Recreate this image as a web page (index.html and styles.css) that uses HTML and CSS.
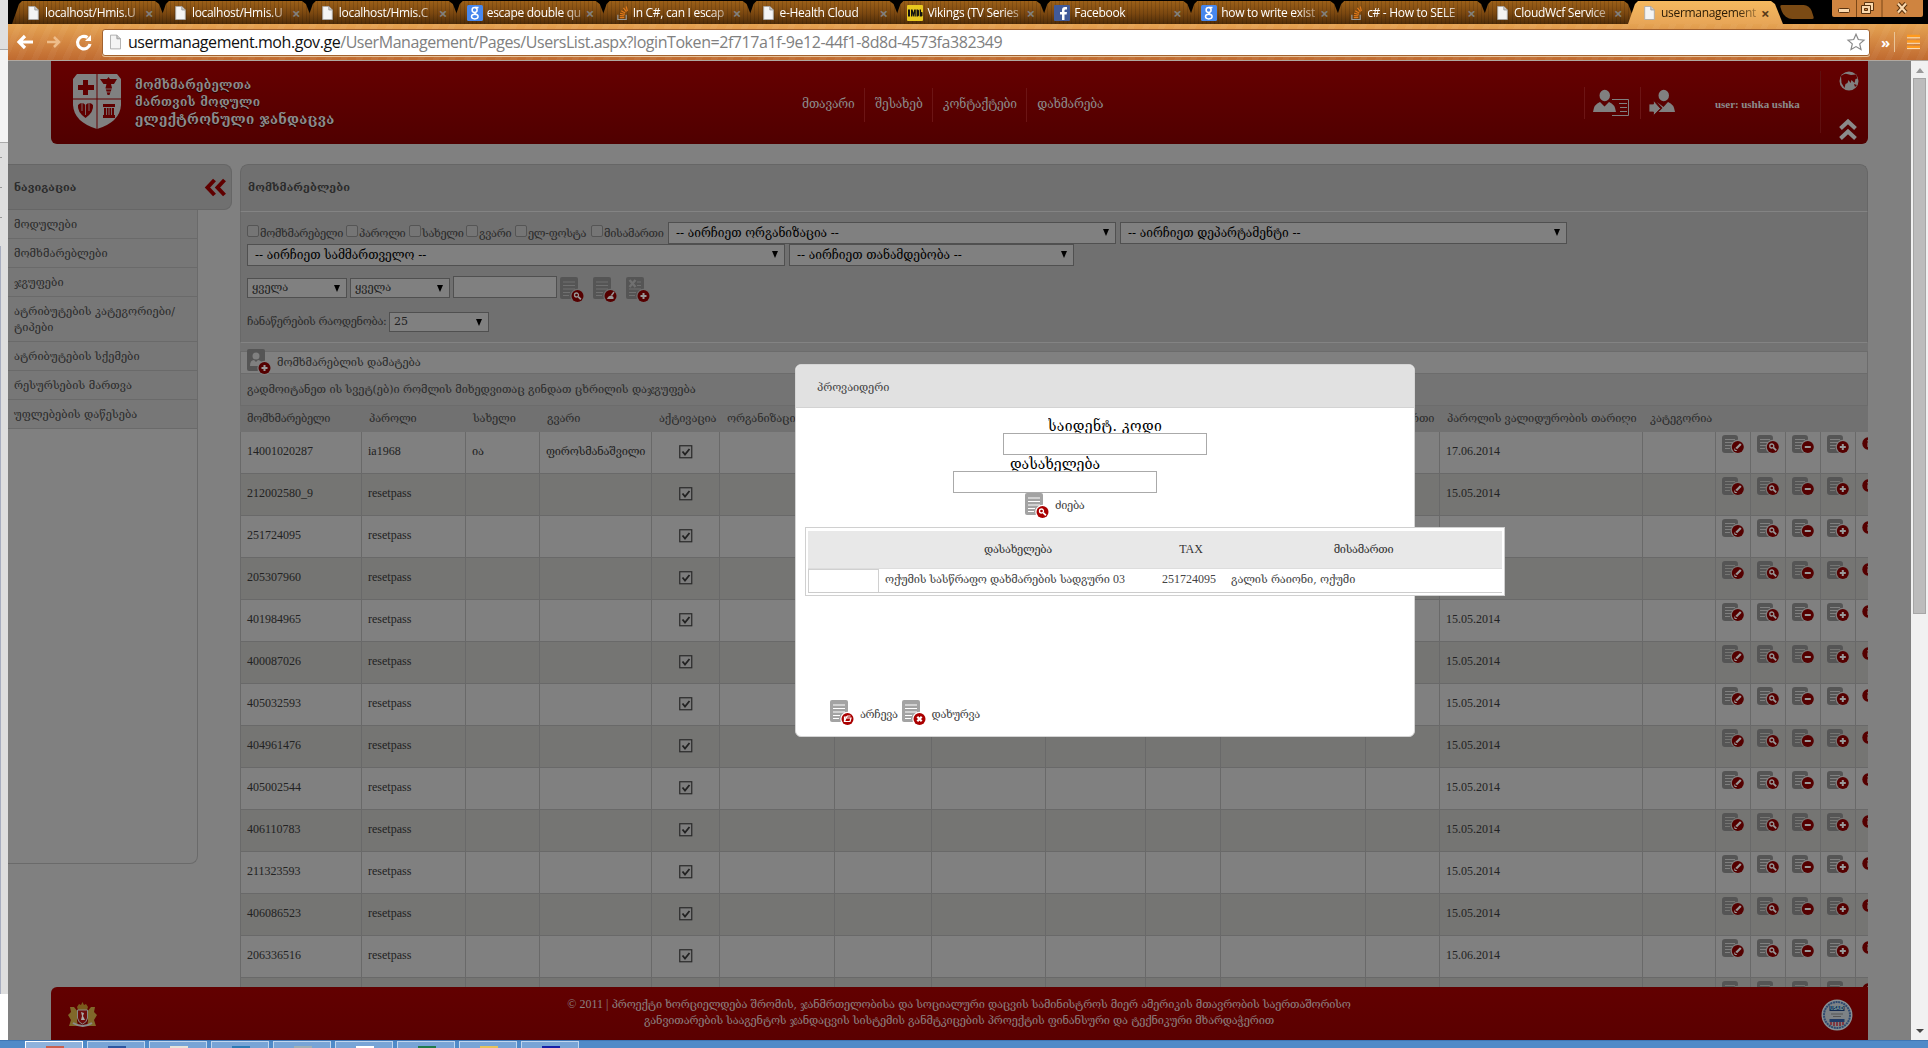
FILE: index.html
```html
<!DOCTYPE html>
<html lang="ka">
<head>
<meta charset="utf-8">
<title>usermanagement</title>
<link rel="stylesheet" href="styles.css">
</head>
<body>
<svg class="defs" aria-hidden="true">
  <symbol id="page" viewBox="0 0 12 16"><path d="M.5.5h7l4 4v11h-11z" fill="#f4f4f4" stroke="#aaa"/><path d="M7.5.5v4h4" fill="#ccc" stroke="#999"/></symbol>
  <symbol id="goog" viewBox="0 0 16 16"><rect width="16" height="16" rx="1.5" fill="#4787ed"/><g fill="none" stroke="#fff" stroke-width="1.5"><ellipse cx="7.6" cy="5" rx="2.5" ry="2.4"/><ellipse cx="7.8" cy="11.6" rx="3.3" ry="2.3"/><path d="M11.5 2.4H8M7 7.5l2 1.7"/></g></symbol>
  <symbol id="so" viewBox="0 0 14 16"><path d="M2 10v5h9v-5" fill="none" stroke="#999" stroke-width="1.3"/><path d="M4 13h5M4 10.8l5 .4M4.4 8.3l5 1.2M5.6 5.5l4.3 2.6M8 2.5l3.2 4M11 1l1.3 5" stroke="#e27a1b" stroke-width="1.3"/></symbol>
  <symbol id="imdb" viewBox="0 0 16 16"><rect width="16" height="16" rx="1" fill="#e8c81e"/><path d="M1 4.5h2v7H1zM4 4.5h1.6l.8 3.5.8-3.5h1.6v7H7.5V8l-.8 3.5H6L5.300 8v3.500H4zM9.500 4.500H11l1 1v5l-1 1H9.500zM12.700 4.500H14V7l1.500.3v3.700l-1 .5h-1.800z" fill="#111"/></symbol>
  <symbol id="fb" viewBox="0 0 16 16"><rect width="16" height="16" rx="1" fill="#415a99"/><path d="M8 15V9.500H6V7h2V5q0-3 3-3h2v2.500h-1.500q-1 0-1 1V7H13l-.4 2.500h-2.100V15z" fill="#fff"/></symbol>
  <symbol id="doc" viewBox="0 0 24 26"><path d="M2 0h14q2 0 2 2v18q0 2-2 2H2q-2 0-2-2V2q0-2 2-2z" fill="var(--doc)"/><path d="M3 5h12M3 8.500h12M3 12h12M3 15.500h7M3 18.500h6" stroke="var(--paper)"/><circle cx="17.500" cy="19" r="7.200" fill="var(--paper)"/><circle cx="17.500" cy="19" r="6" fill="var(--badge)"/></symbol>
  <symbol id="rowdoc" viewBox="0 0 24 20"><path d="M3 0h10q3 0 3 3v15H3q-3 0-3-3V3q0-3 3-3z" fill="var(--doc)"/><path d="M3 4.500h10M3 7.500h8M3 10.500h6M3 13.500h5" stroke="var(--paper)"/><circle cx="15.800" cy="12" r="7.200" fill="var(--paper)"/><circle cx="15.800" cy="12" r="6" fill="var(--badge)"/></symbol>
  <symbol id="g-search" viewBox="-6 -6 12 12"><circle cx="-1" cy="-1" r="2" fill="none" stroke="var(--glyph)" stroke-width="1.300"/><path d="M.6.6L3.400 3.400" stroke="var(--glyph)" stroke-width="1.800"/></symbol>
  <symbol id="g-plus" viewBox="-6 -6 12 12"><path d="M-3 0h6M0-3v6" stroke="var(--glyph)" stroke-width="2"/></symbol>
  <symbol id="g-minus" viewBox="-6 -6 12 12"><path d="M-3 0h6" stroke="var(--glyph)" stroke-width="2"/></symbol>
  <symbol id="g-edit" viewBox="-6 -6 12 12"><path d="M-1.500 1.500L3-3" stroke="var(--glyph)" stroke-width="2.200"/><path d="M-3 1.500v2h2" fill="none" stroke="var(--glyph)"/></symbol>
  <symbol id="g-brush" viewBox="-6 -6 12 12"><path d="M3.500-4L1-.5" stroke="var(--glyph)" stroke-width="1.400"/><path d="M-3.500 3q1-3.500 4.500-3.500L3 1v2z" fill="var(--glyph)"/></symbol>
  <symbol id="g-open" viewBox="-6 -6 12 12"><path d="M-3 2.500v-4.500h2l1-1h3M-3 2.500l1.500-3.500h5L2.500 2.500z" fill="none" stroke="var(--glyph)" stroke-width="1.200"/></symbol>
  <symbol id="g-x" viewBox="-6 -6 12 12"><path d="M-2.200-2.200l4.400 4.400M2.200-2.200l-4.400 4.400" stroke="var(--glyph)" stroke-width="2.200"/></symbol>
</svg>

<div class="desktop">
  <div class="behind"><i class="b1"></i><i class="b2"></i><i class="b3"></i><i class="b4"></i></div>
  <div class="browser">
    <div class="tabs">
      <div class="tab"><svg class="fp"><use href="#page"/></svg><span>localhost/Hmis.U</span><b>×</b></div>
      <div class="tab"><svg class="fp"><use href="#page"/></svg><span>localhost/Hmis.U</span><b>×</b></div>
      <div class="tab"><svg class="fp"><use href="#page"/></svg><span>localhost/Hmis.C</span><b>×</b></div>
      <div class="tab"><svg class="fi"><use href="#goog"/></svg><span>escape double qu</span><b>×</b></div>
      <div class="tab"><svg class="fs"><use href="#so"/></svg><span>In C#, can I escap</span><b>×</b></div>
      <div class="tab"><svg class="fp"><use href="#page"/></svg><span>e-Health Cloud</span><b>×</b></div>
      <div class="tab"><svg class="fi"><use href="#imdb"/></svg><span>Vikings (TV Series</span><b>×</b></div>
      <div class="tab"><svg class="fi"><use href="#fb"/></svg><span>Facebook</span><b>×</b></div>
      <div class="tab"><svg class="fi"><use href="#goog"/></svg><span>how to write exist</span><b>×</b></div>
      <div class="tab"><svg class="fs"><use href="#so"/></svg><span>c# - How to SELE</span><b>×</b></div>
      <div class="tab"><svg class="fp"><use href="#page"/></svg><span>CloudWcf Service</span><b>×</b></div>
      <div class="tab on"><svg class="fp"><use href="#page"/></svg><span>usermanagement</span><b>×</b></div>
      <div class="newtab"></div>
      <div class="winbtns">
        <svg viewBox="0 0 91 17"><path d="M0 0h91v15q0 2-2 2H2q-2 0-2-2z" fill="#cf8440"/><path d="M24.500 0v17M50 0v17" stroke="#7b4717"/><g fill="#fbd9ae" stroke="#5b3410"><rect x="6.500" y="8.500" width="11" height="4" rx="1"/><path d="M32.500 2.500h9v8h-9z"/><path d="M29.500 5.500h9v8h-9z"/><path d="M32.500 8.500h3v2h-3z" fill="#cf8440"/></g><path d="M66 3.500l8 9M74 3.500l-8 9" stroke="#5b3410" stroke-width="4.200"/><path d="M66 3.500l8 9M74 3.500l-8 9" stroke="#fbd9ae" stroke-width="2.200"/></svg>
      </div>
    </div>
    <div class="toolbar">
      <svg class="navbtns" viewBox="0 0 84 24" fill="none" stroke="#fff" stroke-width="3.200"><path d="M17 6l-6 6 6 6M11 12h14"/><path d="M46 7l5 5-5 5M51 12H39" stroke="#eebd8a" stroke-width="2.500"/><path d="M79.500 7.500A6.300 6.300 0 1 0 82 14"/><path d="M83 5v6h-6z" fill="#fff" stroke="none"/></svg>
      <div class="omni">
        <svg class="pg"><use href="#page"/></svg>
        <span class="url"><em>usermanagement.moh.gov.ge</em>/UserManagement/Pages/UsersList.aspx?loginToken=2f717a1f-9e12-44f1-8d8d-4573fa382349</span>
        <svg class="star" viewBox="0 0 18 18"><path d="M9 1.200l2.300 5.300 5.700.6-4.300 3.800 1.300 5.600L9 13.600l-5 2.900 1.300-5.600L1 7.100l5.700-.6z" fill="#fff" stroke="#888" stroke-width="1.200"/></svg>
      </div>
      <span class="more">»</span>
      <svg class="burger" viewBox="0 0 13 15"><path d="M0 2h13M0 7.500h13M0 13h13" stroke="#ff9a1e" stroke-width="2.600"/><path d="M0 3.800h13M0 9.300h13M0 14.600h13" stroke="#ffe3bd"/></svg>
    </div>

    <div class="view">
      <div class="site">
        <header class="top">
          <svg class="crest" viewBox="0 0 48 56"><path d="M4 0h40l4 5v26q-1 17-24 24Q1 48 0 31V5z" fill="#808080"/><path d="M24 0v55M0 25h48" stroke="#600000"/><g fill="#600000"><path d="M10 6h5v5h6v5h-6v5h-5v-5H5v-5h5z"/><path d="M27 5h7l1.500-2L37 5h7l-3 5h-3l1 4-2.500 7h-2l-2-7 1-4h-3z"/><path d="M5 31q4-4 7.500 0 4-4 7.500 0 1 7-7.500 13Q4 38 5 31zM30 30h12v3H30zM31 34h10v7H31zM30 41h12v3H30z"/></g><path d="M9 29v8M12.500 29v12M16 29v8M33.500 33v8M36 33v8M38.500 33v8M32 15h8M33 18h7" stroke="#808080" stroke-width=".8"/></svg>
          <div class="brand"><span>მომხმარებელთა</span><span>მართვის მოდული</span><span class="big">ელექტრონული ჯანდაცვა</span></div>
          <nav class="menu"><span>მთავარი</span><span>შესახებ</span><span>კონტაქტები</span><span>დახმარება</span></nav>
          <div class="usericons">
            <svg viewBox="0 0 36 27"><path d="M17 5.500a5 5.500 0 1 1-10.500 0a5 5.500 0 1 1 10.500 0zM0 22q1-8 7-10l4.500 4.500L16 12q6 2 7 10z" fill="#808080"/><path d="M19 9.500h16.500v16H19M26 13.500h8M27 17.500h7M27 21.500h7" fill="none" stroke="#808080"/></svg>
            <svg viewBox="0 0 36 27"><path d="M20 5.500a5 5.500 0 1 1-10.500 0a5 5.500 0 1 1 10.500 0zM8 12l6.500 5L19 12q6 2 7 10H9.500l4-4z" fill="#808080"/><path d="M0 14h4.500v-3.500l7 8-7 7V22H0z" fill="#808080" stroke="#5c0000" stroke-width=".8"/></svg>
          </div>
          <span class="user">user: ushka ushka</span>
          <div class="corner">
            <svg viewBox="0 0 20 20"><circle cx="10" cy="10" r="9.500" fill="#808080"/><path d="M2 5q4-3 6-2l4 1 5-.5 1.500 4-2 .5-1 4-3-3-1 3-2-3-1 3-2 1-1 4-3-5zM15 13l3 1-2 2z" fill="#600000"/></svg>
            <svg viewBox="0 0 18 21"><path d="M1.500 9.500L9 2.500l7.500 7M1.500 19.500l7.500-7 7.500 7" fill="none" stroke="#8a8a8a" stroke-width="4"/></svg>
          </div>
        </header>

        <div class="main">
          <aside>
            <div class="navhead"><span>ნავიგაცია</span><svg viewBox="0 0 21 17"><path d="M9.500 1L2.500 8.500l7 7.500M19.500 1l-7 7.500 7 7.500" fill="none" stroke="#600000" stroke-width="4"/></svg></div>
            <ul>
              <li>მოდულები</li><li>მომხმარებლები</li><li>ჯგუფები</li><li class="two">ატრიბუტების კატეგორიები/<br>ტიპები</li><li>ატრიბუტების სქემები</li><li>რესურსების მართვა</li><li>უფლებების დაწესება</li>
            </ul>
          </aside>
          <section class="content">
            <h1>მომხმარებლები</h1>
            <div class="filters">
              <div class="frow r1">
                <label style="width:99px"><i></i>მომხმარებელი</label><label style="width:63px"><i></i>პაროლი</label><label style="width:57px"><i></i>სახელი</label><label style="width:49px"><i></i>გვარი</label><label style="width:76px"><i></i>ელ-ფოსტა</label><label style="width:77px"><i></i>მისამართი</label>
                <div class="sel" style="width:448px">-- აირჩიეთ ორგანიზაცია --</div><div class="sel" style="width:447px">-- აირჩიეთ დეპარტამენტი --</div>
              </div>
              <div class="frow r2"><div class="sel" style="width:538px">-- აირჩიეთ სამმართველო --</div><div class="sel" style="width:285px">-- აირჩიეთ თანამდებობა --</div></div>
              <div class="frow r3"><div class="sel sm">ყველა</div><div class="sel sm">ყველა</div><div class="inp"></div>
                <svg class="ic" viewBox="0 0 24 26"><use href="#doc"/><use href="#g-search" x="11.500" y="13" width="12" height="12"/></svg>
                <svg class="ic" viewBox="0 0 24 26"><use href="#doc"/><use href="#g-brush" x="11.500" y="13" width="12" height="12"/></svg>
                <svg class="ic" viewBox="0 0 24 26"><use href="#doc"/><path d="M2 2h9v9H2z" fill="var(--doc)"/><path d="M3.500 3l6 7M9.500 3l-6 7" stroke="var(--paper)" stroke-width="2.400"/><use href="#g-plus" x="11.500" y="13" width="12" height="12"/></svg>
              </div>
              <div class="frow r4"><span class="cnt">ჩანაწერების რაოდენობა:</span><div class="sel sm">25</div></div>
            </div>
            <div class="strip"></div>
            <div class="addrow"><svg class="ic" viewBox="0 0 24 26"><path d="M2 0h14q2 0 2 2v18q0 2-2 2H2q-2 0-2-2V2q0-2 2-2z" fill="var(--doc)"/><circle cx="9" cy="7" r="3.500" fill="var(--paper)"/><path d="M3 17q0-6 4-6l2 2 2-2q4 0 4 6z" fill="var(--paper)"/><circle cx="17.500" cy="19" r="7.200" fill="var(--paper)"/><circle cx="17.500" cy="19" r="6" fill="var(--badge)"/><use href="#g-plus" x="11.500" y="13" width="12" height="12"/></svg><span>მომხმარებლის დამატება</span></div>
            <div class="group">გადმოიტანეთ ის სვეტ(ებ)ი რომლის მიხედვითაც გინდათ ცხრილის დაჯგუფება</div>
            <div class="grid gh"><span>მომხმარებელი</span><span>პაროლი</span><span>სახელი</span><span>გვარი</span><span>აქტივაცია</span><span>ორგანიზაცია</span><span></span><span></span><span></span><span></span><span></span><span>მისამართი</span><span class="wide">პაროლის ვალიდურობის თარიღი</span><span>კატეგორია</span></div>
            <div id="rows"></div>
          </section>
        </div>

        <footer>
          <svg class="arms" viewBox="0 0 29 26"><path d="M9 5l2-3 2 1 1.500-3L16 3l2-1 2 3-1 3h-9z" fill="#7a5a1c"/><path d="M2 5l4 0 4 5-1 9 1 5H1l2-6-3-5 3-3zM27 5h-4l-4 5 1 9-1 5h9l-2-6 3-5-3-3z" fill="#80682a"/><path d="M9.500 8h10v8q-1 5-5 6-4-1-5-6z" fill="#6e0d0d" stroke="#888"/><path d="M13 10l3 1-1 3 2 4h-4l1-4z" fill="#aaa"/><path d="M5 21q10 6 19 0" fill="none" stroke="#8a8a8a" stroke-width="2"/></svg>
          <p><span class="l1"><span class="lat">© 2011 |</span> პროექტი ხორციელდება შრომის, ჯანმრთელობისა და სოციალური დაცვის სამინისტროს მიერ ამერიკის მთავრობის საერთაშორისო</span><br><span class="l2">განვითარების სააგენტოს ჯანდაცვის სისტემის განმტკიცების პროექტის ფინანსური და ტექნიკური მხარდაჭერით</span></p>
          <svg class="usaid" viewBox="0 0 32 32"><circle cx="16" cy="16" r="14.700" fill="#7d8286" stroke="#888f94" stroke-width="1.500"/><circle cx="16" cy="16" r="13" fill="none" stroke="#2f4a70" stroke-width="2" stroke-dasharray="2 .7"/><path d="M8.500 7h15v5h-15z" fill="#12294f"/><path d="M8.500 20h15v3h-15z" fill="#1f3a66"/><path d="M10 23v3M13 23v4M16 23v4M19 23v4M22 23v3" stroke="#80202c" stroke-width="1.500"/><path d="M10 15h12M12 17.500h8" stroke="#555"/><text x="16" y="11.200" font-size="4.500" font-family="Liberation Sans" font-weight="bold" fill="#8aa" text-anchor="middle">USAID</text></svg>
        </footer>
      </div>
      <div class="scroll"><div class="up"></div><div class="thumb"></div><div class="down"></div></div>
    </div>
  </div>
</div>
<div class="taskbar"><i class="act" style="--c:#c9604f"></i><i style="--c:#2c56a0"></i><i style="--c:#e8e4da"></i><i style="--c:#2d7ab5"></i><i style="--c:#9fb0b8"></i><i style="--c:#fff"></i><i style="--c:#1f7a4c"></i><i style="--c:#e8c35c"></i><i style="--c:#1620a8"></i></div>

<div class="modal">
  <div class="mhead">პროვაიდერი</div>
  <div class="field f1"><label>საიდენტ. კოდი</label><div></div></div>
  <div class="field f2"><label>დასახელება</label><div></div></div>
  <div class="find"><svg class="ic" viewBox="0 0 24 26"><use href="#doc"/><use href="#g-search" x="11.500" y="13" width="12" height="12"/></svg><span>ძიება</span></div>
  <div class="result">
    <div class="rr rh"><span></span><span>დასახელება</span><span class="lat">TAX</span><span>მისამართი</span></div>
    <div class="rr"><span class="box"></span><span class="org">ოქუმის სასწრაფო დახმარების სადგური <span class="lat">03</span></span><span class="lat">251724095</span><span>გალის რაიონი, ოქუმი</span></div>
  </div>
  <div class="acts">
    <svg class="ic" viewBox="0 0 24 26"><use href="#doc"/><use href="#g-open" x="11.500" y="13" width="12" height="12"/></svg><span>არჩევა</span>
    <svg class="ic" viewBox="0 0 24 26"><use href="#doc"/><use href="#g-x" x="11.500" y="13" width="12" height="12"/></svg><span>დახურვა</span>
  </div>
</div>
<script src="rows.js"></script>
</body>
</html>
```
FILE: styles.css
```css
* { box-sizing: border-box; }
:root { --doc: #555; --paper: #808080; --badge: #550000; --glyph: #999; }
body { margin: 0; width: 1928px; height: 1048px; overflow: hidden; position: relative; background: #4f8ac8; font: 11px/16px "DejaVu Serif", serif; letter-spacing: -.1px; color: #2b2b2b; white-space: nowrap; }
.defs { position: absolute; width: 0; height: 0; }
svg { display: block; flex: none; overflow: visible; }
.lat { font-family: "Liberation Serif", serif; font-size: 12px; letter-spacing: 0; }

.desktop { display: flex; height: 1040px; }
.behind { width: 8px; display: flex; flex-direction: column; background: #fff; }
.b1 { height: 50px; background: #dfdfdf; border-bottom: 1px solid #aaa; }
.b2 { height: 93px; background: #f3f3f3; border-bottom: 1px solid #aaa; }
.b3 { height: 103px; background: repeating-linear-gradient(#dedede 0 14px, #999 14px 15px, #dedede 15px 30px) 0 0 / 2px 100% no-repeat #dedede; }
.b4 { height: 748px; background: #dedede; border-left: 1px solid #a8aec0; }
.browser { width: 1920px; display: flex; flex-direction: column; background: #000; }

.tabs { height: 24px; padding: 1px 0 0 4px; display: flex; font: 12px/22px "Open Sans", sans-serif; color: #fff; letter-spacing: -.3px; }
.tab { width: 157px; margin-right: -10.1px; height: 23px; flex: none; padding-left: 16px; display: flex; align-items: center; background: repeating-linear-gradient(90deg, #0000 0 3px, #0002 3px 4px), linear-gradient(#9c6018, #7a4710 55%, #4e2c08); clip-path: polygon(0 100%, 7px 3px, 10px 0, 143px 0, 147px 3px, 155px 100%); }
.tab span { flex: 1; margin-right: 2px; -webkit-mask: linear-gradient(90deg, #000 75px, #0005 96px); mask: linear-gradient(90deg, #000 75px, #0005 96px); }
.tab b { width: 24px; font-size: 15px; color: #82807c; line-height: 20px; }
.tab.on { background: linear-gradient(#f5b95f, #e7a557); color: #2a1a05; }
.tab.on b { color: #5a3a18; }
.fp { width: 11px; height: 14px; margin-right: 6px; }
.fi { width: 16px; height: 16px; margin: 0 4px 0 -2px; }
.fs { width: 13px; height: 16px; margin: 0 4px 0 0; }
.newtab { width: 30px; height: 14px; margin: 4px 0 0 7px; background: #7a4a14; border-radius: 2px 6px 2px 8px; transform: skewX(18deg); }
.winbtns { width: 91px; height: 17px; margin: -1px 5px 0 auto; }
.winbtns svg { width: 91px; height: 17px; }
.toolbar { height: 37px; display: flex; align-items: center; padding-bottom: 1px; background: repeating-linear-gradient(115deg, #fff0 0 8px, #ffffff0a 8px 14px), linear-gradient(#e5a352, #d58943 45%, #bf6a30); border-bottom: 1px solid #b0a8a0; }
.navbtns { width: 84px; height: 24px; margin-right: 10px; }
.omni { width: 1768px; height: 27px; margin-top: 1px; background: #fff; border: 1px solid #a2622e; box-shadow: 0 1px 0 #e8c39a; border-radius: 3px; display: flex; align-items: center; padding-left: 7px; }
.pg { width: 11px; height: 16px; margin-right: 7px; }
.url { flex: 1; font: 16px/24px "Open Sans", sans-serif; letter-spacing: -.44px; color: #808080; }
.url em { font-style: normal; color: #111; }
.star { width: 18px; height: 18px; margin-right: 4px; }
.more { font: bold 15px/20px "Open Sans", sans-serif; color: #fff; margin-left: 11px; padding-right: 4px; border-right: 1px solid #e9c498; }
.burger { width: 13px; height: 15px; margin: 0 8px 0 auto; }

.view { flex: 1; display: flex; background: #808080; }
.site { width: 1903px; padding-right: 43px; display: flex; flex-direction: column; }
.top { height: 83px; margin-left: 43px; width: 1817px; border-radius: 0 0 6px 6px; background: linear-gradient(#660000, #500000); color: #8c8c8c; display: flex; font-size: 12px; letter-spacing: -.15px; }
.top > * { flex: none; }
.crest { width: 48px; height: 56px; margin: 13px 0 0 22px; }
.brand { width: 300px; margin: 16px 0 0 14px; display: flex; flex-direction: column; font-weight: bold; font-size: 12px; line-height: 16.500px; letter-spacing: .25px; text-shadow: 0 1px 1px #200; }
.brand .big { font-size: 13.500px; line-height: 19px; }
.menu { display: flex; margin: 27px 0 0 357px; height: 34px; line-height: 33px; width: 792px; }
.menu span { padding: 0 9.500px 0 10px; }
.menu span + span { border-left: 1px solid #6c1515; }
.usericons { display: flex; margin-top: 26px; }
.usericons svg { width: 56px; height: 32px; padding: 3px 11px 2px 8px; border-left: 1px solid #6c1515; }
.user { font: bold 11px/16px "Liberation Serif", serif; letter-spacing: -.05px; margin: 35px 0 0 19px; width: 105px; }
.corner { border-left: 1px solid #5f1010; height: 62px; margin-top: 10px; padding-left: 18px; display: flex; flex-direction: column; gap: 28px; }
.corner svg { width: 20px; height: 20px; }
.corner svg + svg { width: 18px; height: 21px; }

.main { height: 823px; margin-top: 20px; display: flex; gap: 8px; flex: none; }
aside { width: 224px; flex: none; }
.navhead { height: 46px; background: #707070; border: 1px solid #666; border-left: 0; border-radius: 0 8px 8px 0; display: flex; align-items: center; justify-content: space-between; padding: 1px 5px 0 6px; font-weight: bold; letter-spacing: .05px; }
.navhead svg { width: 21px; height: 17px; }
ul { list-style: none; margin: 0; padding: 0; width: 190px; height: 654px; background: linear-gradient(#777 219px, #808080 0); border: 1px solid #6a6a6a; border-width: 0 1px 1px 0; border-radius: 0 0 8px 0; letter-spacing: .05px; }
li { height: 29px; line-height: 29px; padding-left: 6px; border-bottom: 1px solid #6a6a6a; }
li.two { height: 45px; line-height: 16px; padding-top: 7px; }
.content { width: 1628px; flex: none; overflow: hidden; border-radius: 8px 8px 0 0; }
h1 { margin: 0; height: 48px; background: #707070; border: 1px solid #666; border-bottom-color: #838383; border-radius: 8px 8px 0 0; padding-left: 7px; font-size: 11px; line-height: 45px; letter-spacing: .1px; }
.filters { height: 131px; background: #707070; border: 1px solid #686868; border-top: 0; border-bottom-color: #838383; padding: 10px 0 0 6px; --paper: #707070; }
.frow { display: flex; align-items: flex-start; }
label { flex: none; }
.r1 label { display: flex; height: 22px; padding-top: 4px; letter-spacing: -.3px; }
.r1 i { width: 12px; height: 12px; border: 1px solid #555; border-radius: 2px; margin-right: 1px; margin-top: -1px; flex: none; background: #757575; }
.sel { height: 22px; border: 1px solid #505050; background: #808080; color: #000; font-size: 12px; line-height: 20px; padding: 0 6px 0 7px; margin-right: 4px; display: flex; justify-content: space-between; letter-spacing: -.04px; }
.sel::after { content: ""; border: 3.500px solid transparent; border-top: 7px solid #000; border-bottom: 0; margin-top: 6px; }
.sel.sm { width: 100px; height: 20px; font-size: 11px; line-height: 18px; margin-right: 3px; padding-left: 4px; color: #222; letter-spacing: 0; }
.r3 { margin-top: 10px; } .r3 .sel { margin-top: 2px; }
.inp { width: 104px; height: 22px; border: 1px solid #505050; background: #808080; margin-right: 3px; }
.ic { width: 24px; height: 26px; }
.r3 .ic { margin: 1px 9px 0 0; }
.r4 { margin-top: 9px; } .cnt { width: 142px; flex: none; line-height: 20px; letter-spacing: -.3px; }
.strip { height: 9px; background: #737373; border-bottom: 1px solid #6c6c6c; }
.addrow { height: 22px; background: #808080; border: 1px solid #6c6c6c; border-top: 0; display: flex; padding-left: 6px; line-height: 21px; letter-spacing: -.05px; }
.addrow .ic { margin: -3px 6px 0 0; }
.group { height: 32px; background: #747474; border: 1px solid #6c6c6c; border-top: 0; padding-left: 6px; line-height: 31px; letter-spacing: -.05px; }
.grid { display: grid; grid-template-columns: 122px 104px 74px 112px 68px 115px 97px 114px 100px 75px 145px 74px 203px 73px 35px 35px 35px 35px 12px; }
.gh { height: 26px; background: #717171; line-height: 26px; }
.gh span { padding-left: 7px; }
.gh span:first-child { letter-spacing: -.3px; }
.row { height: 42px; background: #808080; --paper: #808080; }
.row:nth-child(even) { background: #757573; --paper: #757573; }
.row > * { border-right: 1px solid #696969; border-bottom: 1px solid #696969; padding-left: 6px; line-height: 39px; font-family: "Liberation Serif", serif; font-size: 12px; letter-spacing: 0; overflow: hidden; color: #222; }
.row > :first-child { border-left: 1px solid #696969; }
.row .ka { font: 11px/40px "DejaVu Serif", serif; letter-spacing: -.15px; }
.row .ck { padding: 13px 0 0 27px; }
.row .act { padding: 3px 0 0 6px; }
.row .act svg { width: 24px; height: 20px; }
.row .inf { border-right: 0; padding: 5px 0 0 6px; }
.row .inf svg { width: 13px; height: 13px; }

footer { height: 53px; margin-left: 43px; width: 1817px; background: linear-gradient(#620000, #5a0000); border-radius: 6px 0 0 0; display: flex; align-items: flex-start; justify-content: space-between; padding: 15px 15px 0 17px; color: #8c8080; flex: none; }
.arms { width: 29px; height: 26px; }
footer p { margin: -6px 0 0; text-align: center; }
.l1, .l2 { letter-spacing: -.17px; }
.usaid { width: 32px; height: 32px; margin-top: -3px; }

.scroll { width: 17px; background: #f1f1f1; display: flex; flex-direction: column; align-items: center; }
.up { border: 4px solid transparent; border-top: 0; border-bottom: 5px solid #999; margin-top: 7px; }
.thumb { width: 13px; height: 536px; margin-top: 5px; background: #bcbcbc; border: 1px solid #a6a6a6; }
.down { border: 4px solid transparent; border-bottom: 0; border-top: 4px solid #444; margin: auto 0 7px; }

.taskbar { height: 8px; background: #4f8ac8; border-top: 1px solid #3f76b4; display: flex; gap: 4px; padding-left: 25px; }
.taskbar i { width: 58px; height: 8px; background: linear-gradient(var(--c), var(--c)) 20px 4px / 18px 4px no-repeat, #78a4d6; border: 1px solid #c0d6ee; border-bottom: 0; }
.taskbar .act { background-color: #8fb2dc; border-color: #fff; }

.modal { --doc: #a3a3a3; --paper: #fff; --badge: #aa0000; --glyph: #fff; position: absolute; left: 795px; top: 364px; width: 620px; height: 373px; background: #fff; border: 1px solid #d4d4d4; border-radius: 6px; color: #444; }
.mhead { height: 43px; background: #e1e1e1; border-bottom: 1px solid #d3d3d3; border-radius: 5px 5px 0 0; padding-left: 21px; line-height: 46px; }
.field { width: 204px; color: #000; display: flex; flex-direction: column; align-items: center; }
.field label { font-size: 14px; line-height: 16px; height: 15px; overflow: hidden; letter-spacing: 0; }
.f1 label { letter-spacing: .35px; }
.field div { width: 204px; height: 22px; border: 1px solid #aaa; background: #fff; }
.f1 { margin: 10px 0 1px 207px; }
.f2 { margin-left: 157px; }
.find { display: flex; margin: 0 0 0 229px; line-height: 25px; }
.find span { margin-left: 6px; letter-spacing: -.3px; }
.result { width: 700px; height: 69px; margin: 8px 0 0 9px; padding: 3px 2px; border: 1px solid #d0d0d0; background: #fff; position: relative; }
.rr { display: grid; grid-template-columns: 71px 278px 68px 277px; height: 24px; line-height: 21px; border-bottom: 1px solid #ccc; }
.rr > span { padding-left: 6px; }
.rr > .org { letter-spacing: -.2px; }
.rr > span.lat { padding-left: 5px; }
.rr.rh { height: 38px; line-height: 37px; background: #e8e8e8; border-bottom: 1px solid #ddd; text-align: center; color: #333; letter-spacing: -.3px; }
.rr.rh > span { padding: 0; }
.rr > .box { border: 1px solid #d0d0d0; border-bottom: 0; }
.acts { display: flex; margin: 104px 0 0 34px; line-height: 29px; }
.acts span { margin: 0 4px 0 6px; letter-spacing: -.35px; }
```
FILE: rows.js
```js
const users = [
  ["14001020287", "ia1968", "17.06.2014"],
  ["212002580_9", "resetpass", "15.05.2014"],
  ["251724095", "resetpass", ""],
  ["205307960", "resetpass", ""],
  ["401984965", "resetpass", "15.05.2014"],
  ["400087026", "resetpass", "15.05.2014"],
  ["405032593", "resetpass", "15.05.2014"],
  ["404961476", "resetpass", "15.05.2014"],
  ["405002544", "resetpass", "15.05.2014"],
  ["406110783", "resetpass", "15.05.2014"],
  ["211323593", "resetpass", "15.05.2014"],
  ["406086523", "resetpass", "15.05.2014"],
  ["206336516", "resetpass", "15.06.2014"],
  ["", "", ""]
];
const check = '<svg width="14" height="14" viewBox="0 0 14 14"><rect x=".75" y=".75" width="12" height="12" fill="#7d7d7d" stroke="#2a2a2a" stroke-width="1.2"/><path d="M3.500 6.500l2.500 3 4.500-5.500" fill="none" stroke="#222" stroke-width="1.800"/></svg>';
const action = g => `<span class="act"><svg viewBox="0 0 24 20"><use href="#rowdoc"/><use href="#g-${g}" x="9.8" y="6" width="12" height="12"/></svg></span>`;
document.getElementById("rows").innerHTML = users.map(([id, pass, date], i) => `
  <div class="grid row"><span>${id}</span><span>${pass}</span><span class="ka">${i ? "" : "ია"}</span><span class="ka">${i ? "" : "ფიროსმანაშვილი"}</span>
  <span class="ck">${check}</span>${"<span></span>".repeat(7)}<span>${date}</span><span></span>
  ${["edit", "search", "minus", "plus"].map(action).join("")}
  <span class="inf"><svg viewBox="0 0 13 13"><circle cx="6.500" cy="6.500" r="6.200" fill="#550000"/><path d="M6.500 3v1.500M6.500 5.500V10" stroke="#999" stroke-width="2"/></svg></span></div>`).join("");
```
